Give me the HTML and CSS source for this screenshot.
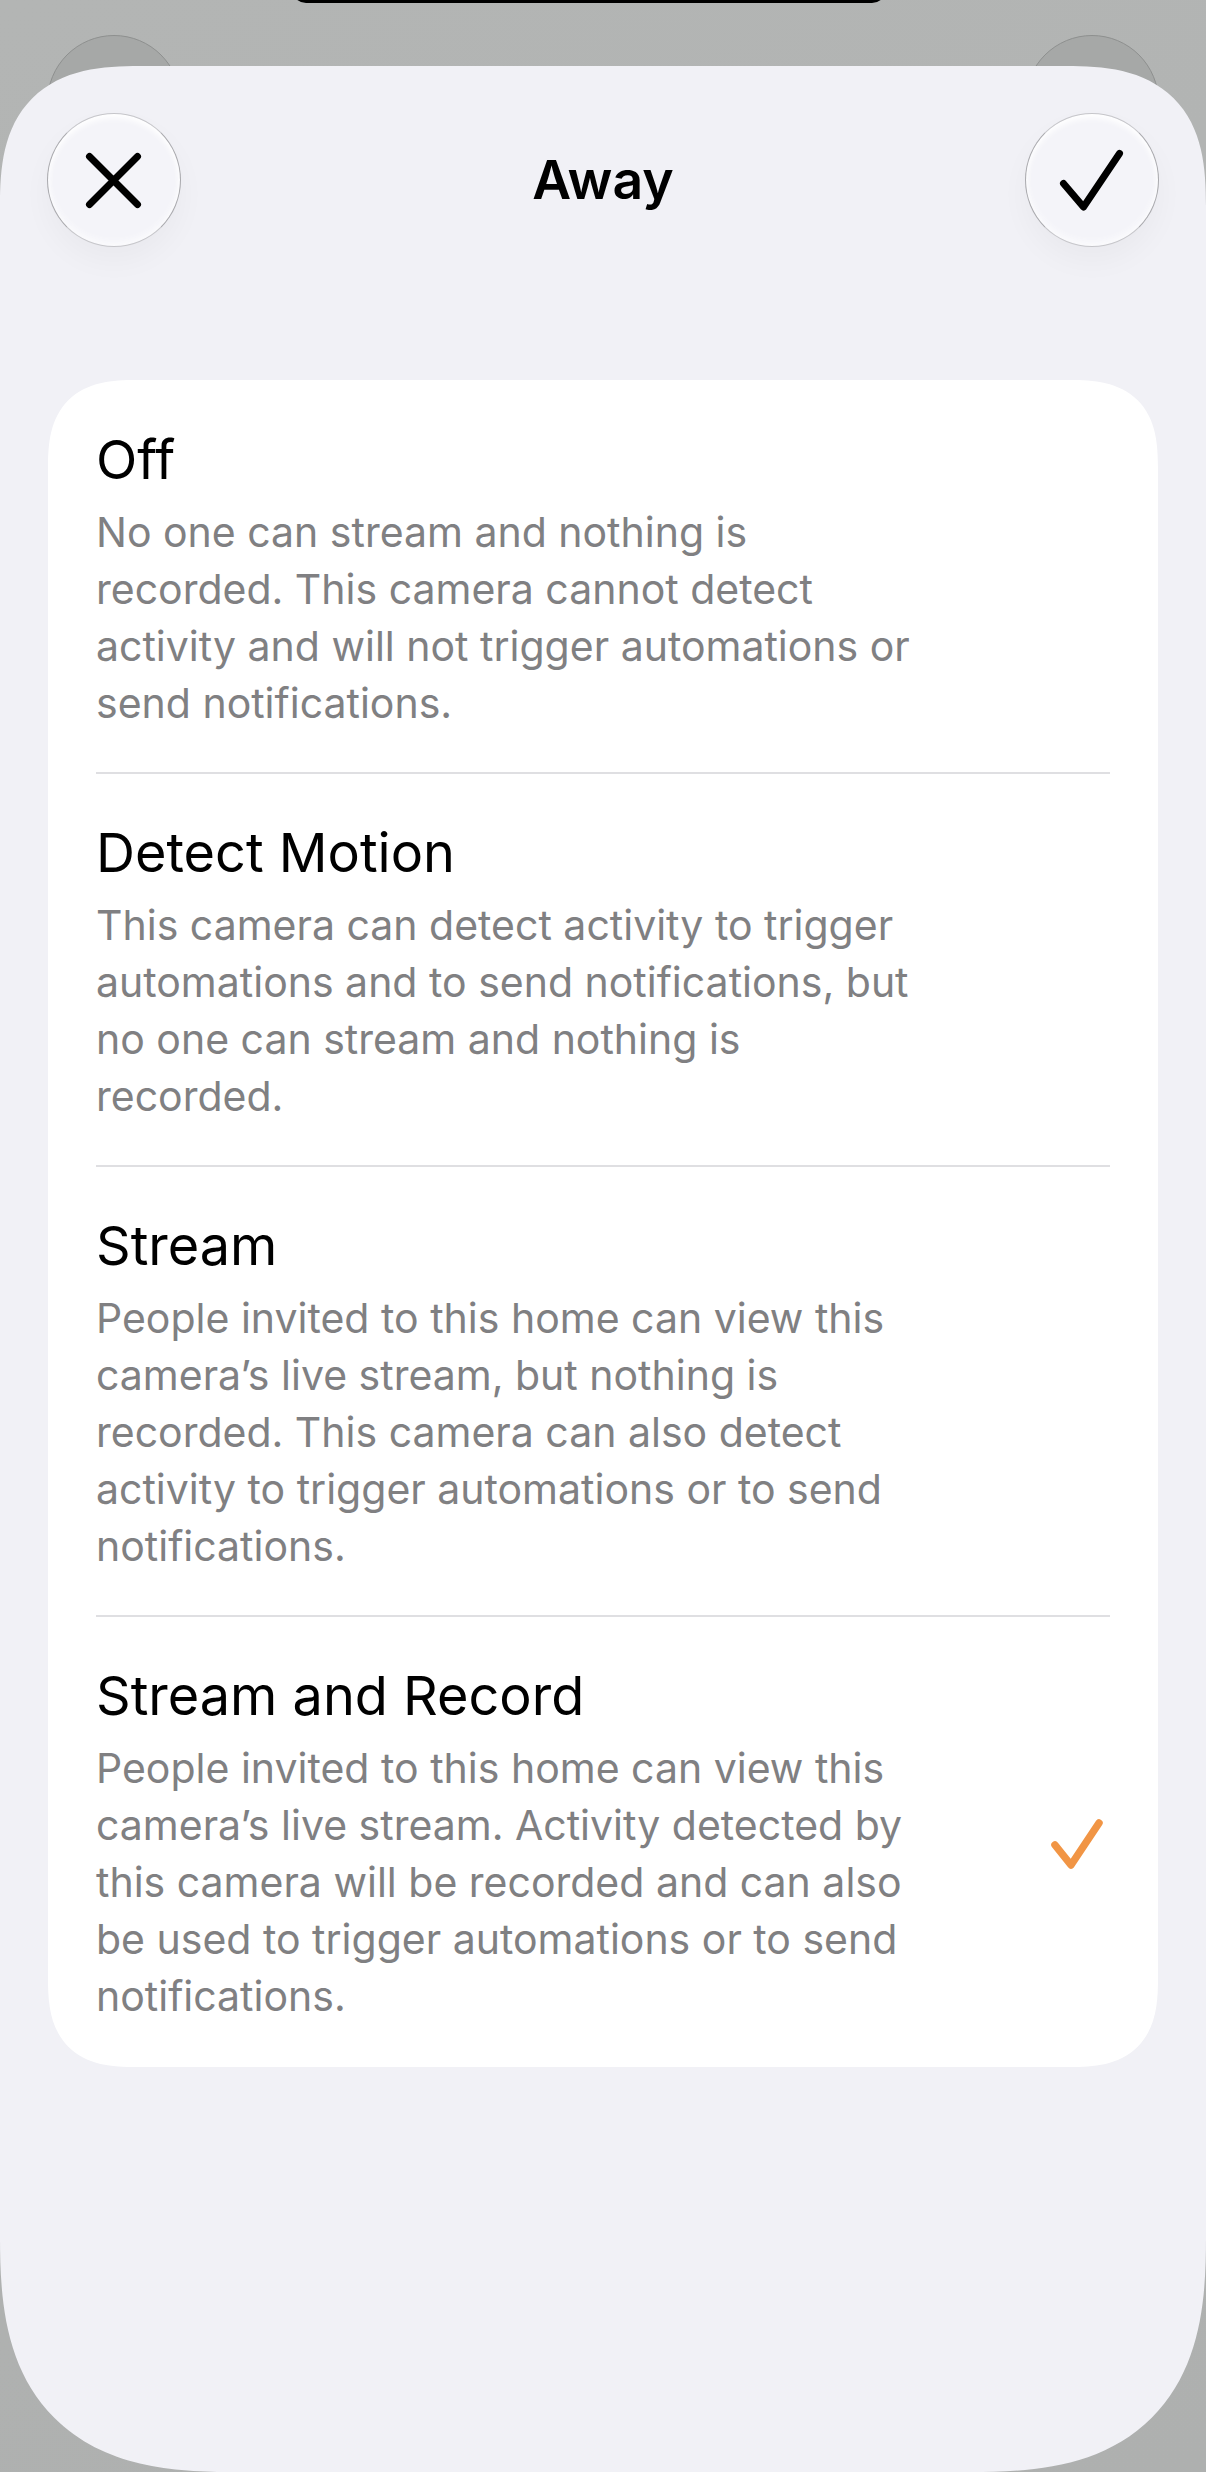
FILE: index.html
```html
<!DOCTYPE html>
<html lang="en">
<head>
<meta charset="utf-8">
<title>Away</title>
<link rel="stylesheet" href="styles.css">
</head>
<body>
<div class="screen">
  <div class="notch"></div>
  <div class="behind behind-left"></div>
  <div class="behind behind-right"></div>
  <main class="sheet">
    <header class="bar">
      <button class="round" aria-label="Close">
        <svg class="glyph" viewBox="0 0 131 131"><path d="M41.5 41.5 L89.5 89.5 M89.5 41.5 L41.5 89.5"/></svg>
      </button>
      <h1 class="heading">Away</h1>
      <button class="round" aria-label="Done">
        <svg class="glyph" viewBox="0 0 131 131"><path d="M37.5 68.5 L57.5 92 L93.5 38.5"/></svg>
      </button>
    </header>
    <section class="card">
      <div class="row">
        <div class="copy">
          <h2 class="name">Off</h2>
          <p class="desc">No one can stream and nothing is<br>recorded. This camera cannot detect<br>activity and will not trigger automations or<br>send notifications.</p>
        </div>
      </div>
      <div class="row">
        <div class="copy">
          <h2 class="name">Detect Motion</h2>
          <p class="desc">This camera can detect activity to trigger<br>automations and to send notifications, but<br>no one can stream and nothing is<br>recorded.</p>
        </div>
      </div>
      <div class="row">
        <div class="copy">
          <h2 class="name">Stream</h2>
          <p class="desc">People invited to this home can view this<br>camera’s live stream, but nothing is<br>recorded. This camera can also detect<br>activity to trigger automations or to send<br>notifications.</p>
        </div>
      </div>
      <div class="row">
        <div class="copy">
          <h2 class="name">Stream and Record</h2>
          <p class="desc">People invited to this home can view this<br>camera’s live stream. Activity detected by<br>this camera will be recorded and can also<br>be used to trigger automations or to send<br>notifications.</p>
        </div>
        <svg class="tick" viewBox="0 0 54 52"><path d="M5 26 L21 46 L49 4"/></svg>
      </div>
    </section>
  </main>
</div>
</body>
</html>
```
FILE: styles.css
```css
* { box-sizing: border-box; }
html, body { margin: 0; padding: 0; }
body { font-family: Inter, "Liberation Sans", sans-serif; }
.screen {
  position: relative;
  width: 1206px;
  height: 2472px;
  overflow: hidden;
  padding-top: 66px;
  background: linear-gradient(160deg, #b3b5b4 0%, #aeb0af 100%);
}
.notch {
  position: absolute;
  left: 292px;
  top: -12px;
  width: 594px;
  height: 15px;
  background: #000;
  border-radius: 0 0 14px 14px;
}
.behind {
  position: absolute;
  top: 35px;
  width: 134px;
  height: 134px;
  border-radius: 50%;
  background: #a6a8a7;
  border: 1px solid #8e908f;
}
.behind-left { left: 47px; }
.behind-right { right: 47px; }
.sheet {
  position: relative;
  height: 2406px;
  background: #f1f1f6;
  border-radius: 140px 140px 235px 235px;
  corner-shape: superellipse(1.4);
  padding: 47px 47px 0 47px;
}
.bar {
  display: flex;
  justify-content: space-between;
  align-items: center;
  height: 134px;
}
.heading {
  margin: 0;
  font-size: 53.5px;
  line-height: 60px;
  font-weight: 600;
  color: #000;
}
.round {
  width: 134px;
  height: 134px;
  padding: 0;
  border-radius: 50%;
  border: 1.5px solid #a9a9ad;
  border-top-color: #c6c6ca;
  border-bottom-color: #c6c6ca;
  background: #f4f4f9;
  box-shadow: inset 0 4px 6px #ffffff, inset 0 -4px 6px #fbfbfd, 0 14px 30px rgba(0, 0, 0, 0.035);
}
.glyph { display: block; width: 131px; height: 131px; }
.glyph path {
  fill: none;
  stroke: #000;
  stroke-width: 7;
  stroke-linecap: round;
  stroke-linejoin: round;
}
.card {
  margin: 133px 1px 0 1px;
  background: #fff;
  border-radius: 88px;
  corner-shape: superellipse(1.4);
  padding: 0 48px;
}
.row {
  display: flex;
  align-items: center;
  justify-content: space-between;
  padding: 47px 0 40px;
  border-bottom: 2px solid #dfdfe2;
}
.row:first-child { padding-top: 48px; }
.row:last-child { border-bottom: 0; padding-bottom: 42px; }
.name {
  margin: 0 0 12px;
  font-size: 54px;
  line-height: 64px;
  font-weight: 400;
  color: #000;
}
.desc {
  margin: 0;
  font-size: 41px;
  line-height: 57px;
  font-weight: 400;
  color: #808082;
  white-space: nowrap;
}
.tick {
  width: 54px;
  height: 52px;
  margin-right: 6px;
  flex: none;
}
.tick path {
  fill: none;
  stroke: #f19545;
  stroke-width: 7.5;
  stroke-linecap: round;
  stroke-linejoin: round;
}
```
